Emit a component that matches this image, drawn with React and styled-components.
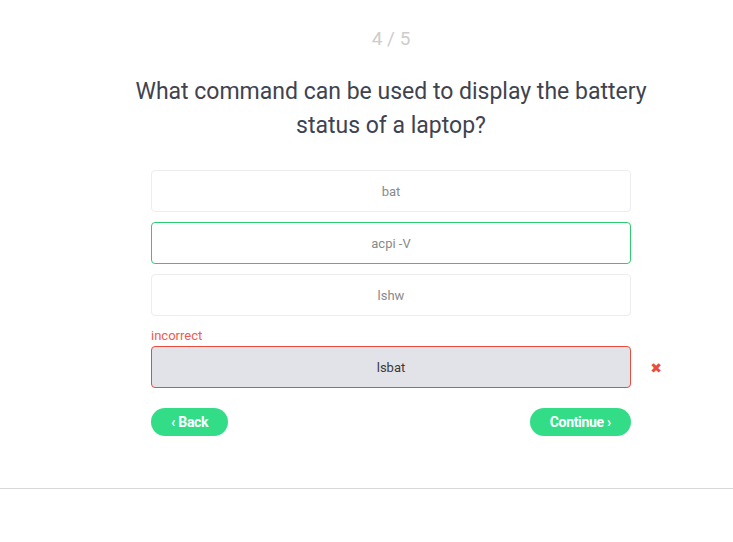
import styled, { createGlobalStyle } from "styled-components";

const GlobalStyle = createGlobalStyle`
    body {
        margin: 0;
        background: #fff;
        font-family: "Roboto", "Liberation Sans", sans-serif;
    }
`

const options = [
    { label: "bat", state: "none" },
    { label: "acpi -V", state: "correct" },
    { label: "lshw", state: "none" },
    { label: "lsbat", state: "wrong" },
]

export default function App (){
    return(
        <>
            <GlobalStyle />
            <Page>
                <Quiz>
                    <Counter>4 / 5</Counter>
                    <Question>What command can be used to display the battery status of a laptop?</Question>
                    <Options>
                        {options.map((o) => (
                            <OptionRow key={o.label}>
                                {o.state === "wrong" && <Incorrect>incorrect</Incorrect>}
                                <Option state={o.state}>{o.label}</Option>
                                {o.state === "wrong" && <Cross>✖</Cross>}
                            </OptionRow>
                        ))}
                    </Options>
                    <Buttons>
                        <NavButton>‹ Back</NavButton>
                        <NavButton>Continue ›</NavButton>
                    </Buttons>
                </Quiz>
                <Divider />
            </Page>
        </>
    )
}

const Page = styled.div`
    width: 100%;
    padding-top: 28px;
`
const Quiz = styled.div`
    width: 480px;
    margin: 0 auto;
    padding-left: 49px;
    display: flex;
    flex-direction: column;
`
const Counter = styled.div`
    text-align: center;
    font-size: 19px;
    color: #cdcdcd;
    line-height: 22px;
`
const Question = styled.h1`
    margin: 25px -40px 0;
    text-align: center;
    font-weight: 400;
    font-size: 23px;
    line-height: 34px;
    color: #40434f;
`
const Options = styled.div`
    margin-top: 27px;
    display: flex;
    flex-direction: column;
    gap: 10px;
`
const OptionRow = styled.div`
    position: relative;
`
const Option = styled.div`
    height: 42px;
    box-sizing: border-box;
    display: flex;
    align-items: center;
    justify-content: center;
    border-radius: 4px;
    font-size: 13px;
    color: ${(p) => (p.state === "wrong" ? "#3a3a3a" : "#8a8a8a")};
    background: ${(p) => (p.state === "wrong" ? "#e2e3e8" : "#fff")};
    border: 1px solid ${(p) =>
        p.state === "correct" ? "#2ecc71" : p.state === "wrong" ? "#e74c3c" : "#ededed"};
`
const Incorrect = styled.div`
    font-size: 13px;
    color: #ef5b4f;
    line-height: 20px;
`
const Cross = styled.span`
    position: absolute;
    right: -31px;
    bottom: 12px;
    color: #e74c3c;
    font-size: 14px;
    font-family: "DejaVu Sans", sans-serif;
`
const Buttons = styled.div`
    margin-top: 20px;
    display: flex;
    justify-content: space-between;
`
const NavButton = styled.button`
    height: 28px;
    padding: 0 20px;
    border: none;
    border-radius: 14px;
    background: #33dd88;
    color: #fff;
    font-family: "Roboto", sans-serif;
    font-weight: 700;
    font-size: 14px;
    letter-spacing: -0.3px;
`
const Divider = styled.div`
    margin-top: 52px;
    height: 1px;
    background: #d8d8d8;
`
